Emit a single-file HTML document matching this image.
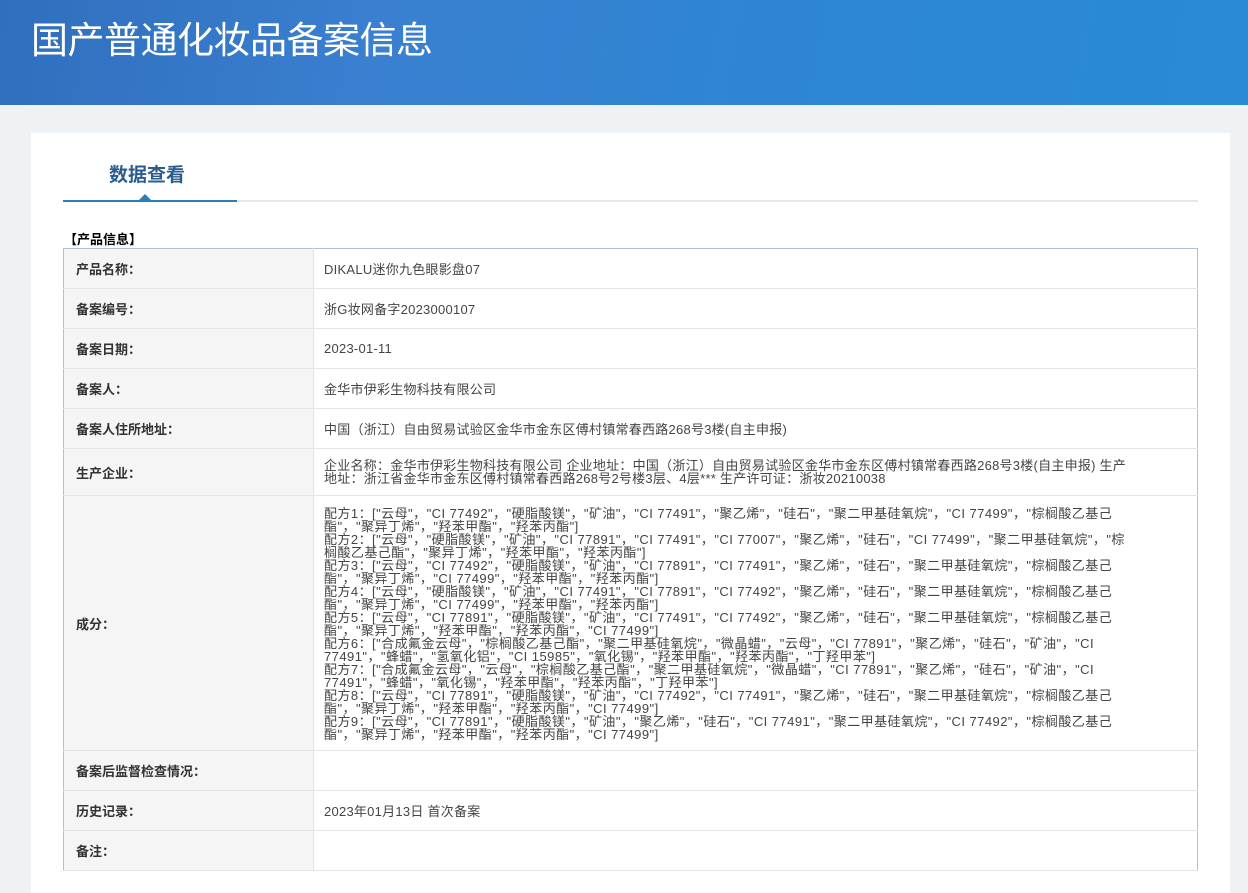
<!DOCTYPE html>
<html><head><meta charset="utf-8"><style>
*{margin:0;padding:0;box-sizing:border-box}
body{width:1248px;height:887px;overflow:hidden;background:#eef2f5;font-family:"Liberation Sans","Noto Sans CJK SC",sans-serif;color:#333}
.hd{height:105px;background:linear-gradient(100deg,#2f6fbd 0%,#3a7fd0 30%,#2e86d2 60%,#2a8ad4 100%);position:relative}
.hd h1{position:absolute;left:31px;top:10px;font-size:37px;font-weight:normal;color:#fff;letter-spacing:-0.5px}
.card{position:absolute;left:31px;top:133px;width:1199px;height:760px;background:#fff}
.tab{position:absolute;left:78px;top:27px;font-size:19px;font-weight:bold;color:#2a5c8f}
.line{position:absolute;left:32px;top:67px;width:1135px;height:2px;background:#e6e8ea}
.line2{position:absolute;left:32px;top:67px;width:174px;height:2px;background:#2d7cb8}
.tri{position:absolute;left:108px;top:61px;width:0;height:0;border-left:6px solid transparent;border-right:6px solid transparent;border-bottom:6px solid #2d7cb8}
.sec{position:absolute;left:33px;top:96px;font-size:13px;font-weight:bold;color:#000}
table{position:absolute;left:32px;top:115px;width:1135px;border-collapse:collapse;border:1px solid #a9c2d8;font-size:13px}
td{border-bottom:1px solid #e4e4e4;vertical-align:middle}
td.l{width:250px;background:#f5f5f5;font-weight:bold;padding-left:12px;border-right:1px solid #e4e4e4}
td.v{padding-left:10px;color:#444;letter-spacing:0.25px}
.ing{line-height:13px;padding:11px 0 9px 10px;color:#444;letter-spacing:0.45px}
</style></head><body>
<div class="hd"><h1>国产普通化妆品备案信息</h1></div>
<div class="card">
<div class="tab">数据查看</div>
<div class="line"></div><div class="line2"></div><div class="tri"></div>
<div class="sec">【产品信息】</div>
<table>
<tr style="height:40px"><td class="l">产品名称：</td><td class="v">DIKALU迷你九色眼影盘07</td></tr>
<tr style="height:40px"><td class="l">备案编号：</td><td class="v">浙G妆网备字2023000107</td></tr>
<tr style="height:40px"><td class="l">备案日期：</td><td class="v">2023-01-11</td></tr>
<tr style="height:40px"><td class="l">备案人：</td><td class="v">金华市伊彩生物科技有限公司</td></tr>
<tr style="height:40px"><td class="l">备案人住所地址：</td><td class="v">中国（浙江）自由贸易试验区金华市金东区傅村镇常春西路268号3楼(自主申报)</td></tr>
<tr style="height:47px"><td class="l">生产企业：</td><td class="v" style="line-height:13px">企业名称：金华市伊彩生物科技有限公司 企业地址：中国（浙江）自由贸易试验区金华市金东区傅村镇常春西路268号3楼(自主申报) 生产<br>地址：浙江省金华市金东区傅村镇常春西路268号2号楼3层、4层*** 生产许可证：浙妆20210038</td></tr>
<tr style="height:255px"><td class="l">成分：</td><td class="ing">配方1：["云母"，"CI 77492"，"硬脂酸镁"，"矿油"，"CI 77491"，"聚乙烯"，"硅石"，"聚二甲基硅氧烷"，"CI 77499"，"棕榈酸乙基己<br>酯"，"聚异丁烯"，"羟苯甲酯"，"羟苯丙酯"]<br>配方2：["云母"，"硬脂酸镁"，"矿油"，"CI 77891"，"CI 77491"，"CI 77007"，"聚乙烯"，"硅石"，"CI 77499"，"聚二甲基硅氧烷"，"棕<br>榈酸乙基己酯"，"聚异丁烯"，"羟苯甲酯"，"羟苯丙酯"]<br>配方3：["云母"，"CI 77492"，"硬脂酸镁"，"矿油"，"CI 77891"，"CI 77491"，"聚乙烯"，"硅石"，"聚二甲基硅氧烷"，"棕榈酸乙基己<br>酯"，"聚异丁烯"，"CI 77499"，"羟苯甲酯"，"羟苯丙酯"]<br>配方4：["云母"，"硬脂酸镁"，"矿油"，"CI 77491"，"CI 77891"，"CI 77492"，"聚乙烯"，"硅石"，"聚二甲基硅氧烷"，"棕榈酸乙基己<br>酯"，"聚异丁烯"，"CI 77499"，"羟苯甲酯"，"羟苯丙酯"]<br>配方5：["云母"，"CI 77891"，"硬脂酸镁"，"矿油"，"CI 77491"，"CI 77492"，"聚乙烯"，"硅石"，"聚二甲基硅氧烷"，"棕榈酸乙基己<br>酯"，"聚异丁烯"，"羟苯甲酯"，"羟苯丙酯"，"CI 77499"]<br>配方6：["合成氟金云母"，"棕榈酸乙基己酯"，"聚二甲基硅氧烷"，"微晶蜡"，"云母"，"CI 77891"，"聚乙烯"，"硅石"，"矿油"，"CI<br>77491"，"蜂蜡"，"氢氧化铝"，"CI 15985"，"氧化锡"，"羟苯甲酯"，"羟苯丙酯"，"丁羟甲苯"]<br>配方7：["合成氟金云母"，"云母"，"棕榈酸乙基己酯"，"聚二甲基硅氧烷"，"微晶蜡"，"CI 77891"，"聚乙烯"，"硅石"，"矿油"，"CI<br>77491"，"蜂蜡"，"氧化锡"，"羟苯甲酯"，"羟苯丙酯"，"丁羟甲苯"]<br>配方8：["云母"，"CI 77891"，"硬脂酸镁"，"矿油"，"CI 77492"，"CI 77491"，"聚乙烯"，"硅石"，"聚二甲基硅氧烷"，"棕榈酸乙基己<br>酯"，"聚异丁烯"，"羟苯甲酯"，"羟苯丙酯"，"CI 77499"]<br>配方9：["云母"，"CI 77891"，"硬脂酸镁"，"矿油"，"聚乙烯"，"硅石"，"CI 77491"，"聚二甲基硅氧烷"，"CI 77492"，"棕榈酸乙基己<br>酯"，"聚异丁烯"，"羟苯甲酯"，"羟苯丙酯"，"CI 77499"]</td></tr>
<tr style="height:40px"><td class="l">备案后监督检查情况：</td><td class="v"></td></tr>
<tr style="height:40px"><td class="l">历史记录：</td><td class="v">2023年01月13日 首次备案</td></tr>
<tr style="height:40px"><td class="l">备注：</td><td class="v"></td></tr>
</table>
</div>
</body></html>
